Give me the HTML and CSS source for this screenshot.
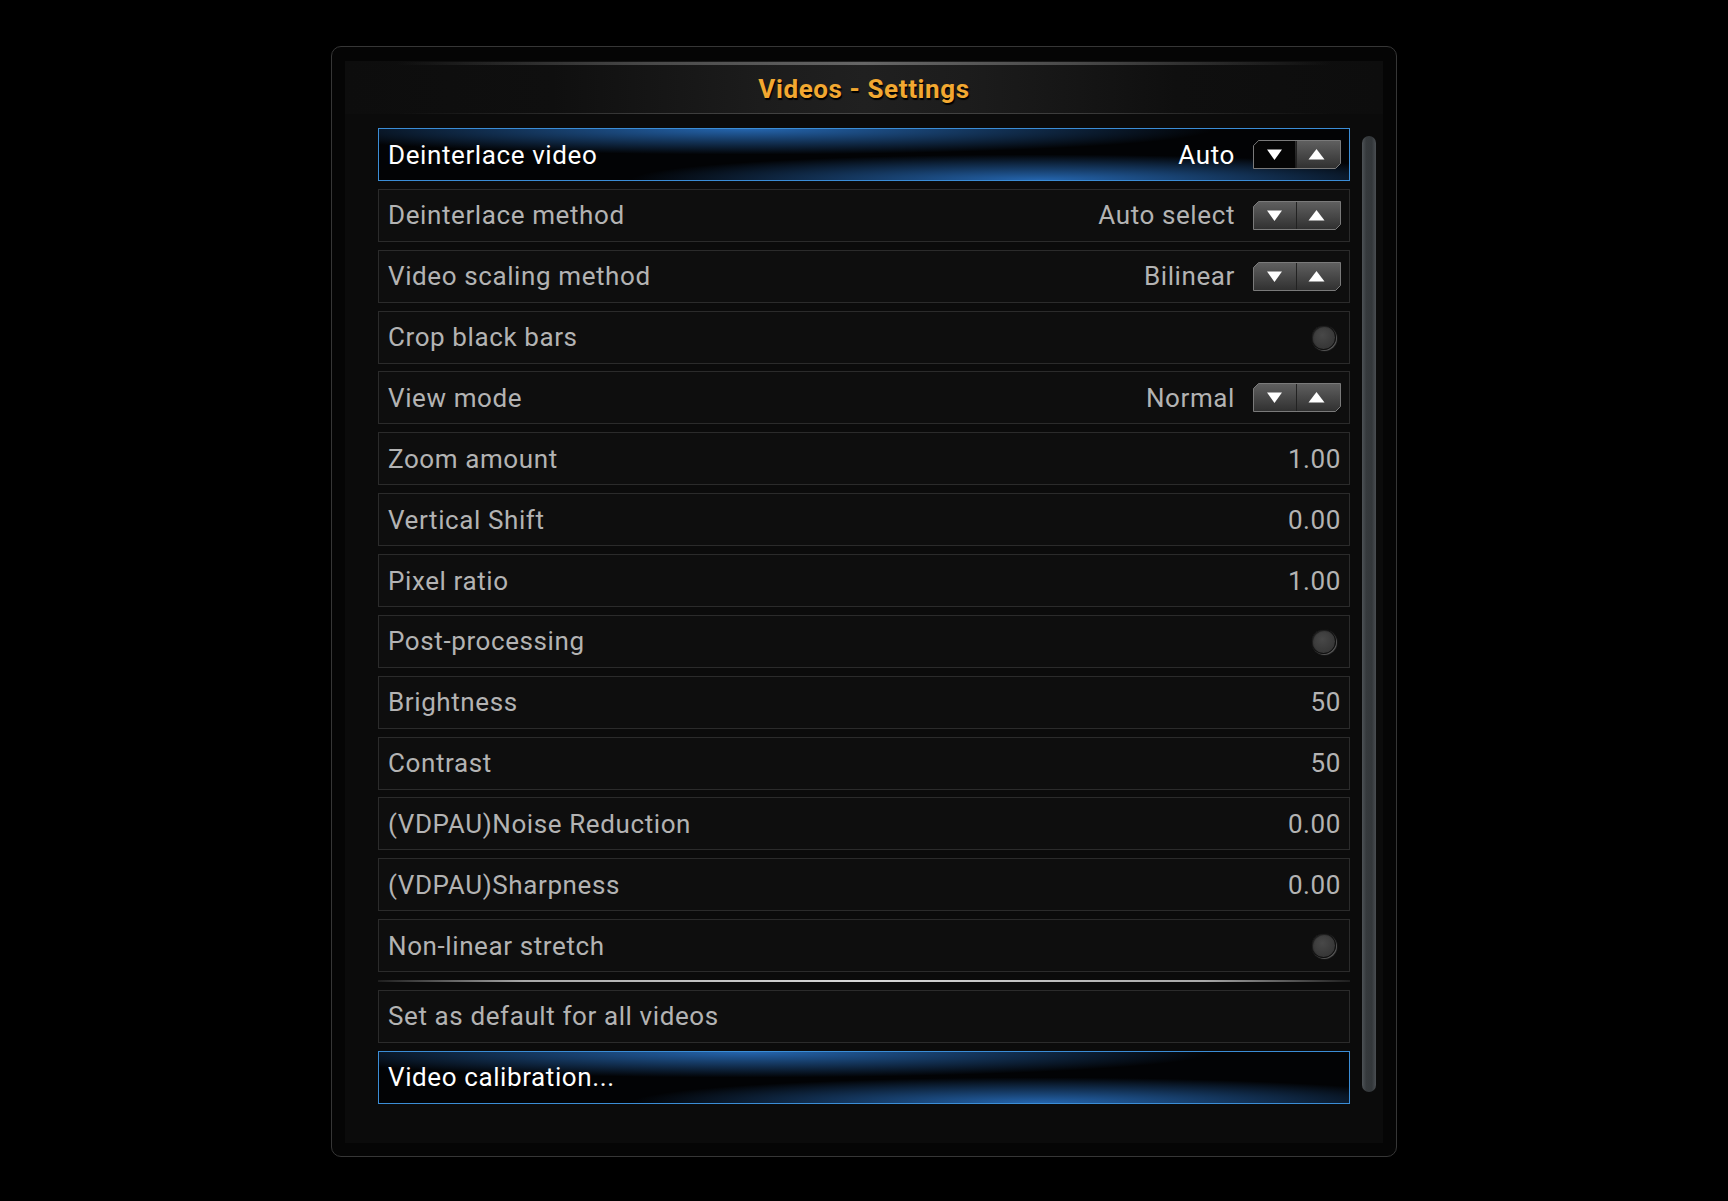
FILE: index.html
```html
<!DOCTYPE html>
<html lang="en">
<head>
    <meta charset="UTF-8">
    <title>Videos - Settings</title>
    <link rel="stylesheet" href="styles.css">
</head>
<body>
    <div class="dialog">
        <div class="panel">
            <div class="title-bar">
                <h1 class="title">Videos - Settings</h1>
            </div>
            <div class="content">
                <div class="list">
                    <div class="row focused">
                        <span class="label">Deinterlace video</span>
                        <span class="value">Auto</span>
                        <svg class="spinner" viewBox="0 0 88 29" width="88" height="29">
                            <defs>
                                <linearGradient id="btn" x1="0" y1="0" x2="0" y2="1">
                                    <stop offset="0" stop-color="#606060"/>
                                    <stop offset="1" stop-color="#303030"/>
                                </linearGradient>
                            </defs>
                            <polygon points="5.5,0.5 87.5,0.5 87.5,23.5 82.5,28.5 0.5,28.5 0.5,5.5" fill="url(#btn)" stroke="#7a7a7a" stroke-width="1"/>
                            <polygon points="5.5,1 42.5,1 42.5,28 1,28 1,5.5" fill="#050505"/>
                            <line x1="43.5" y1="1" x2="43.5" y2="28" stroke="#222" stroke-width="1"/>
                            <polygon points="14,9.5 29,9.5 21.5,20" fill="#fff"/>
                            <polygon points="55.5,19.5 71.5,19.5 63.5,9" fill="#fff"/>
                        </svg>
                    </div>
                    <div class="row">
                        <span class="label">Deinterlace method</span>
                        <span class="value">Auto select</span>
                        <svg class="spinner" viewBox="0 0 88 29" width="88" height="29">
                            <polygon points="5.5,0.5 87.5,0.5 87.5,23.5 82.5,28.5 0.5,28.5 0.5,5.5" fill="url(#btn)" stroke="#7a7a7a" stroke-width="1"/>
                            <line x1="43.5" y1="1" x2="43.5" y2="28" stroke="#222" stroke-width="1"/>
                            <polygon points="14,9.5 29,9.5 21.5,20" fill="#fff"/>
                            <polygon points="55.5,19.5 71.5,19.5 63.5,9" fill="#fff"/>
                        </svg>
                    </div>
                    <div class="row">
                        <span class="label">Video scaling method</span>
                        <span class="value">Bilinear</span>
                        <svg class="spinner" viewBox="0 0 88 29" width="88" height="29">
                            <polygon points="5.5,0.5 87.5,0.5 87.5,23.5 82.5,28.5 0.5,28.5 0.5,5.5" fill="url(#btn)" stroke="#7a7a7a" stroke-width="1"/>
                            <line x1="43.5" y1="1" x2="43.5" y2="28" stroke="#222" stroke-width="1"/>
                            <polygon points="14,9.5 29,9.5 21.5,20" fill="#fff"/>
                            <polygon points="55.5,19.5 71.5,19.5 63.5,9" fill="#fff"/>
                        </svg>
                    </div>
                    <div class="row">
                        <span class="label">Crop black bars</span>
                        <span class="radio"></span>
                    </div>
                    <div class="row">
                        <span class="label">View mode</span>
                        <span class="value">Normal</span>
                        <svg class="spinner" viewBox="0 0 88 29" width="88" height="29">
                            <polygon points="5.5,0.5 87.5,0.5 87.5,23.5 82.5,28.5 0.5,28.5 0.5,5.5" fill="url(#btn)" stroke="#7a7a7a" stroke-width="1"/>
                            <line x1="43.5" y1="1" x2="43.5" y2="28" stroke="#222" stroke-width="1"/>
                            <polygon points="14,9.5 29,9.5 21.5,20" fill="#fff"/>
                            <polygon points="55.5,19.5 71.5,19.5 63.5,9" fill="#fff"/>
                        </svg>
                    </div>
                    <div class="row">
                        <span class="label">Zoom amount</span>
                        <span class="value">1.00</span>
                    </div>
                    <div class="row">
                        <span class="label">Vertical Shift</span>
                        <span class="value">0.00</span>
                    </div>
                    <div class="row">
                        <span class="label">Pixel ratio</span>
                        <span class="value">1.00</span>
                    </div>
                    <div class="row">
                        <span class="label">Post-processing</span>
                        <span class="radio"></span>
                    </div>
                    <div class="row">
                        <span class="label">Brightness</span>
                        <span class="value">50</span>
                    </div>
                    <div class="row">
                        <span class="label">Contrast</span>
                        <span class="value">50</span>
                    </div>
                    <div class="row">
                        <span class="label">(VDPAU)Noise Reduction</span>
                        <span class="value">0.00</span>
                    </div>
                    <div class="row">
                        <span class="label">(VDPAU)Sharpness</span>
                        <span class="value">0.00</span>
                    </div>
                    <div class="row">
                        <span class="label">Non-linear stretch</span>
                        <span class="radio"></span>
                    </div>
                    <div class="separator"></div>
                    <div class="row">
                        <span class="label">Set as default for all videos</span>
                    </div>
                    <div class="row focused">
                        <span class="label">Video calibration...</span>
                    </div>
                </div>
                <div class="scrollbar"></div>
            </div>
        </div>
    </div>
</body>
</html>
```

FILE: styles.css
```css
body {
    margin: 0;
    background-color: #000;
    font-family: Roboto, 'Liberation Sans', sans-serif;
    padding-top: 46px;
}

.dialog {
    box-sizing: border-box;
    width: 1066px;
    height: 1111px;
    margin: 0 auto;
    padding: 14px 13px 13px 13px;
    border: 1px solid #363636;
    border-radius: 10px;
    background-color: #050505;
}

.panel {
    height: 100%;
    background: linear-gradient(180deg, #111 0%, #0c0c0c 100%);
    display: flex;
    flex-direction: column;
}

.title-bar {
    height: 53px;
    background: linear-gradient(90deg, #0d0d0d 0%, #0f0f0f 20%, #1c1c1c 40%, #202020 50%, #1c1c1c 60%, #0f0f0f 80%, #0d0d0d 100%);
    position: relative;
    display: flex;
    align-items: center;
    justify-content: center;
}

.title-bar::before,
.title-bar::after {
    content: "";
    position: absolute;
    left: 0;
    right: 0;
}

/* highlight along the top edge */
.title-bar::before {
    top: 1px;
    height: 3px;
    background: linear-gradient(90deg, rgba(80, 80, 80, 0) 5%, #4a4a4a 30%, #666 50%, #4a4a4a 70%, rgba(80, 80, 80, 0) 95%);
}

.title-bar::after {
    bottom: 0;
    height: 1px;
    background: linear-gradient(90deg, rgba(60, 60, 60, 0) 5%, #3c3c3c 30%, #454545 50%, #3c3c3c 70%, rgba(60, 60, 60, 0) 95%);
}

.title {
    margin: 2px 0 0 0;
    font-size: 26px;
    font-weight: bold;
    letter-spacing: 0.6px;
    color: #f2a831;
    text-shadow: 1px 2px 1px #000;
}

.content {
    flex: 1;
    display: flex;
    padding: 14px 7px 0 33px;
    gap: 12px;
    background-color: #0b0b0b;
}

.list {
    width: 972px;
    display: flex;
    flex-direction: column;
    gap: 7.87px;
}

.row {
    box-sizing: border-box;
    height: 53px;
    border: 1px solid #2b2b2b;
    background-color: #0e0e0e;
    display: flex;
    align-items: center;
    padding: 0 8px 0 9px;
    font-size: 26px;
    letter-spacing: 0.6px;
    color: #b3b3b3;
}

.row.focused {
    border-color: #3b8dd6;
    color: #fff;
    background:
        radial-gradient(ellipse 48% 50% at 38% 0%, rgba(45, 125, 215, 0.8), rgba(45, 125, 215, 0) 100%),
        radial-gradient(ellipse 42% 50% at 68% 100%, rgba(45, 125, 215, 0.8), rgba(45, 125, 215, 0) 100%),
        #020305;
}

.label {
    flex: 1;
}

.value {
    margin-left: 12px;
}

.spinner {
    display: block;
    margin-left: 18px;
}

.radio {
    width: 23px;
    height: 23px;
    margin-right: 5px;
    border-radius: 50%;
    background: radial-gradient(circle at 45% 40%, #484848 0%, #373737 70%);
    border: 1px solid #111;
    box-shadow: 1px 1px 1px #5a5a5a, inset 1px 1px 1px #1e1e1e;
}

.separator {
    height: 2px;
    background: linear-gradient(90deg, rgba(200, 200, 200, 0.1) 0%, #a8a8a8 15%, #d8d8d8 50%, #a8a8a8 85%, rgba(200, 200, 200, 0.1) 100%);
}

.scrollbar {
    width: 14px;
    height: 956px;
    margin-top: 8px;
    border-radius: 7px;
    background: linear-gradient(90deg, #4e5357 0%, #363a3d 30%, #33373a 70%, #4a4e52 100%);
}
```
